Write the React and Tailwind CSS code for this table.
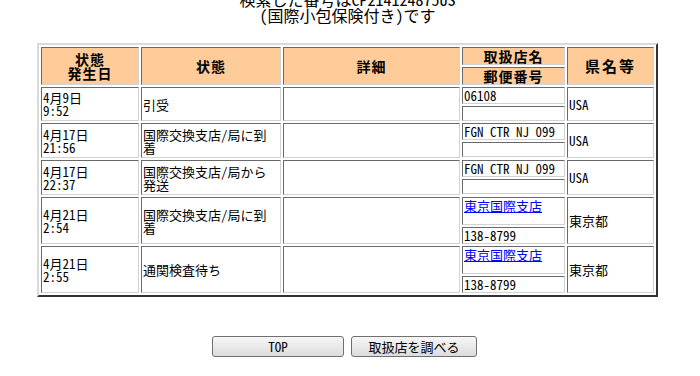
import React from "react";

const rows = [
  { date: "4月9日", time: "9:52", status: "引受", office: "06108", zip: "", pref: "USA", h: "h-[34px]" },
  { date: "4月17日", time: "21:56", status: "国際交換支店/局に到着", office: "FGN CTR NJ 099", zip: "", pref: "USA", h: "h-[35px]" },
  { date: "4月17日", time: "22:37", status: "国際交換支店/局から発送", office: "FGN CTR NJ 099", zip: "", pref: "USA", h: "h-[35px]" },
  { date: "4月21日", time: "2:54", status: "国際交換支店/局に到着", office: "東京国際支店", link: true, zip: "138-8799", pref: "東京都", h: "h-[47px]" },
  { date: "4月21日", time: "2:55", status: "通関検査待ち", office: "東京国際支店", link: true, zip: "138-8799", pref: "東京都", h: "h-[46px]" },
];

// inset cell border like an old border=1 table
const cell = "border border-t-[#6a6a6a] border-l-[#6a6a6a] border-r-[#d2d2d2] border-b-[#d2d2d2]";
const head = `${cell} bg-[#ffcc99] font-bold text-[14px] leading-[14px] text-center`;
const btn =
  "h-[21px] rounded-[3px] border border-[#707070] bg-gradient-to-b from-[#f7f7f7] to-[#dcdcdc] text-[13px] leading-[13px] font-normal";

export default function App() {
  return (
    <div className="w-[695px] bg-white text-black font-['Noto_Sans_CJK_JP',sans-serif] [font-feature-settings:'hwid']">
      {/* Title */}
      <div className="-mt-[9px] text-center text-[16px] leading-[16px]">
        検索した番号はCP214124875US
        <br />
        (国際小包保険付き)です
      </div>

      {/* Result table */}
      <table className="mx-auto mt-[20px] w-[621px] table-fixed border-separate border-spacing-[2px] border-2 border-t-[#dadada] border-l-[#dadada] border-r-[#333] border-b-[#333] text-[13px] leading-[13px]">
        <colgroup>
          <col className="w-[98px]" />
          <col className="w-[140px]" />
          <col className="w-[177px]" />
          <col className="w-[103px]" />
          <col className="w-[87px]" />
        </colgroup>
        <thead>
          <tr className="h-[38px]">
            <th className={`${head} tracking-[1px]`}>
              状態
              <br />
              発生日
            </th>
            <th className={`${head} tracking-[1px]`}>状態</th>
            <th className={`${head} tracking-[1px]`}>詳細</th>
            <th className="p-0 align-top h-[38px]">
              <div className="flex flex-col gap-[2px] h-full">
                <div className={`${head} h-[18px] flex items-center justify-center tracking-[1px]`}>取扱店名</div>
                <div className={`${head} flex-1 flex items-center justify-center tracking-[1px]`}>郵便番号</div>
              </div>
            </th>
            <th className={`${head} text-[15px] tracking-[2px]`}>県名等</th>
          </tr>
        </thead>
        <tbody>
          {rows.map((r, i) => (
            <tr key={i} className={r.h}>
              <td className={`${cell} px-[1px]`}>
                {r.date}
                <br />
                {r.time}
              </td>
              <td className={`${cell} pl-[1px] pr-[4px]`}>{r.status}</td>
              <td className={cell}></td>
              <td className="p-0 align-top">
                <div className={`flex flex-col gap-[2px] h-full ${r.link ? "min-h-[47px]" : "min-h-[34px]"}`}>
                  <div className={`${cell} flex-1 px-[1px] pt-[1px]`}>
                    {r.link ? (
                      <a href="#" className="text-[#0000ff] underline underline-offset-[1px]">
                        {r.office}
                      </a>
                    ) : (
                      r.office
                    )}
                  </div>
                  <div className={`${cell} px-[1px] flex items-center ${r.link ? "h-[17px]" : "h-[15px]"}`}>{r.zip}</div>
                </div>
              </td>
              <td className={`${cell} px-[1px]`}>{r.pref}</td>
            </tr>
          ))}
        </tbody>
      </table>

      {/* Buttons */}
      <div className="mt-[39px] pr-[6px] flex justify-center gap-[7px]">
        <button className={`${btn} w-[132px]`}>TOP</button>
        <button className={`${btn} w-[126px]`}>取扱店を調べる</button>
      </div>
    </div>
  );
}
